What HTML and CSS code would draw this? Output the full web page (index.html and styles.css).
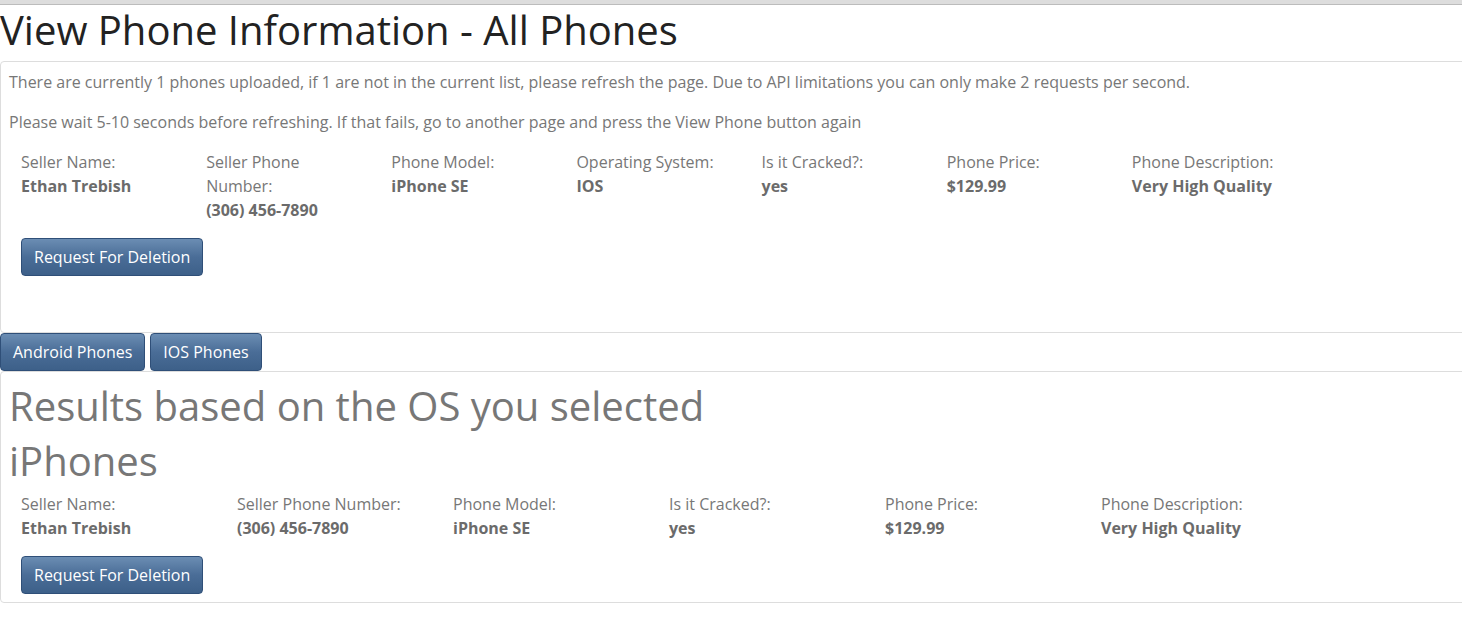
FILE: index.html
```html
<!DOCTYPE html>
<html>
<head>
<meta charset="utf-8">
<link rel="stylesheet" href="styles.css">
</head>
<body>
<div class="topbar"></div>
<h1 class="page-title">View Phone Information - All Phones</h1>
<div class="panel panel-all">
  <p class="note">There are currently 1 phones uploaded, if 1 are not in the current list, please refresh the page. Due to API limitations you can only make 2 requests per second.</p>
  <p class="note">Please wait 5-10 seconds before refreshing. If that fails, go to another page and press the View Phone button again</p>
  <div class="phone">
    <div class="fields fields-7">
      <div class="field"><div class="label">Seller Name:</div><div class="value">Ethan Trebish</div></div>
      <div class="field"><div class="label">Seller Phone Number:</div><div class="value">(306) 456-7890</div></div>
      <div class="field"><div class="label">Phone Model:</div><div class="value">iPhone SE</div></div>
      <div class="field"><div class="label">Operating System:</div><div class="value">IOS</div></div>
      <div class="field"><div class="label">Is it Cracked?:</div><div class="value">yes</div></div>
      <div class="field"><div class="label">Phone Price:</div><div class="value">$129.99</div></div>
      <div class="field"><div class="label">Phone Description:</div><div class="value">Very High Quality</div></div>
    </div>
    <button class="btn">Request For Deletion</button>
  </div>
</div>
<div class="tabs">
  <button class="btn btn-tab">Android Phones</button>
  <button class="btn btn-tab">IOS Phones</button>
</div>
<div class="panel panel-os">
  <div class="results-title">Results based on the OS you selected</div>
  <div class="results-title">iPhones</div>
  <div class="phone">
    <div class="fields fields-6">
      <div class="field"><div class="label">Seller Name:</div><div class="value">Ethan Trebish</div></div>
      <div class="field"><div class="label">Seller Phone Number:</div><div class="value">(306) 456-7890</div></div>
      <div class="field"><div class="label">Phone Model:</div><div class="value">iPhone SE</div></div>
      <div class="field"><div class="label">Is it Cracked?:</div><div class="value">yes</div></div>
      <div class="field"><div class="label">Phone Price:</div><div class="value">$129.99</div></div>
      <div class="field"><div class="label">Phone Description:</div><div class="value">Very High Quality</div></div>
    </div>
    <button class="btn">Request For Deletion</button>
  </div>
</div>
</body>
</html>
```
FILE: styles.css
```css
html, body {
  margin: 0;
  padding: 0;
  background: #fff;
  overflow: hidden;
}
body {
  font-family: "Open Sans", "Liberation Sans", sans-serif;
  font-size: 16px;
  line-height: 24px;
  color: #777;
  font-stretch: 92%;
}
.topbar {
  height: 4px;
  background: #dddddd;
  border-bottom: 1px solid #bcbcbc;
}
.page-title {
  margin: 3px 0 9px 0;
  font-size: 40px;
  line-height: 44px;
  font-weight: 400;
  color: #222;
}
.panel {
  width: 1480px;
  border: 1px solid #dddddd;
  border-radius: 4px;
  box-sizing: border-box;
}
.panel-all {
  padding: 8px 8px 56px 8px;
}
.note {
  margin: 0 0 16px 0;
}
.phone {
  padding-left: 12px;
}
.fields {
  display: grid;
  width: 1296px;
}
.fields-7 { grid-template-columns: repeat(7, 1fr); }
.fields-6 { grid-template-columns: repeat(6, 1fr); }
.field {
  padding-right: 30px;
}
.value {
  font-weight: 700;
  color: #6b6b6b;
}
.btn {
  font-family: inherit;
  font-stretch: inherit;
  font-size: 16px;
  line-height: 22px;
  color: #fff;
  background: linear-gradient(to bottom, #6b8db3 0%, #4a6d97 50%, #3d6089 100%);
  border: 1px solid #2f4f78;
  border-radius: 4px;
  padding: 7px 12px;
  margin-top: 16px;
  cursor: pointer;
}
.tabs {
  display: flex;
  gap: 5px;
  height: 38px;
}
.btn-tab {
  margin: 0;
  height: 38px;
}
.panel-os {
  padding: 6px 8px 8px 8px;
}
.results-title {
  font-size: 40px;
  line-height: 55px;
  color: #777;
}
.panel-os .fields {
  margin-top: 4px;
}
.panel-os .btn {
  margin-top: 16px;
}
```
